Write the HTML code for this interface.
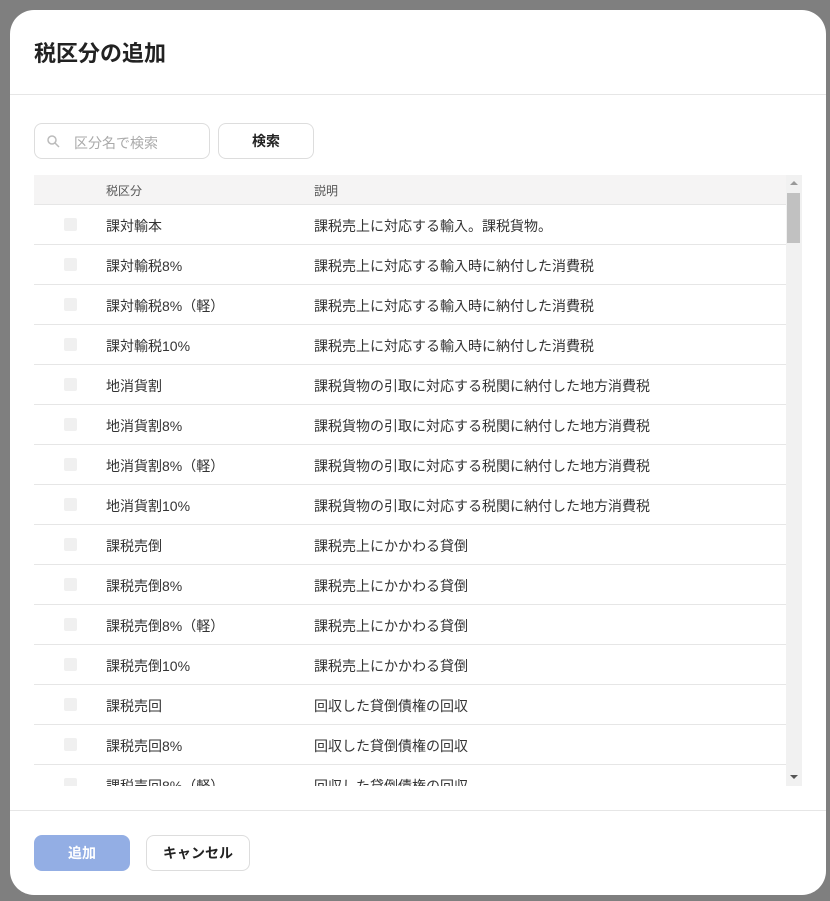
<!DOCTYPE html>
<html><head><meta charset="utf-8"><style>
*{box-sizing:border-box;margin:0;padding:0}
body{width:830px;height:901px;background:#7f7f7f;position:relative;overflow:hidden;font-family:"Liberation Sans","Noto Sans CJK JP",sans-serif;color:#333}
.modal{position:absolute;left:10px;top:10px;width:816px;height:885px;background:#fff;border-radius:24px;overflow:hidden}
h1{position:absolute;left:24px;top:26px;font-size:22px;font-weight:bold;color:#222}
.hr{position:absolute;left:0;right:0;height:1px;background:#e6e6e6}
.search{position:absolute;left:24px;top:113px;width:176px;height:36px;border:1px solid #ddd;border-radius:8px;font-size:14px;color:#aaa;padding:9px 0 0 39px}
.btn{position:absolute;border:1px solid #ddd;border-radius:8px;font-size:14px;font-weight:bold;color:#222;text-align:center}
.tbl{position:absolute;left:24px;top:165px;width:752px;height:611px;overflow:hidden}
.th{height:30px;background:#f5f4f4;border-bottom:1px solid #e6e6e6;font-size:12px;color:#555;position:relative}
.row{height:40px;border-bottom:1px solid #e6e6e6;position:relative;font-size:14px;color:#333}
.c1{position:absolute;left:72px;top:11px}
.c2{position:absolute;left:280px;top:11px}
.th .c1,.th .c2{top:7px}
.cb{position:absolute;left:30px;top:13px;width:13px;height:13px;background:#f0f0f0;border-radius:2px}
.sb{position:absolute;left:776px;top:165px;width:16px;height:611px;background:#f1f1f1}
</style></head><body>
<div class="modal">
<h1>税区分の追加</h1>
<div class="hr" style="top:84px"></div>
<div class="search"><svg style="position:absolute;left:12px;top:11px" width="13" height="13" viewBox="0 0 13 13"><circle cx="5" cy="5" r="4" fill="none" stroke="#bbb" stroke-width="1.5"/><path d="M8 8l4 4" stroke="#bbb" stroke-width="1.5"/></svg>区分名で検索</div>
<div class="btn" style="left:208px;top:113px;width:96px;height:36px;line-height:34px">検索</div>
<div class="tbl">
<div class="th"><span class="c1">税区分</span><span class="c2">説明</span></div>
<div class="row"><i class="cb"></i><span class="c1">課対輸本</span><span class="c2">課税売上に対応する輸入。課税貨物。</span></div>
<div class="row"><i class="cb"></i><span class="c1">課対輸税8%</span><span class="c2">課税売上に対応する輸入時に納付した消費税</span></div>
<div class="row"><i class="cb"></i><span class="c1">課対輸税8%（軽）</span><span class="c2">課税売上に対応する輸入時に納付した消費税</span></div>
<div class="row"><i class="cb"></i><span class="c1">課対輸税10%</span><span class="c2">課税売上に対応する輸入時に納付した消費税</span></div>
<div class="row"><i class="cb"></i><span class="c1">地消貨割</span><span class="c2">課税貨物の引取に対応する税関に納付した地方消費税</span></div>
<div class="row"><i class="cb"></i><span class="c1">地消貨割8%</span><span class="c2">課税貨物の引取に対応する税関に納付した地方消費税</span></div>
<div class="row"><i class="cb"></i><span class="c1">地消貨割8%（軽）</span><span class="c2">課税貨物の引取に対応する税関に納付した地方消費税</span></div>
<div class="row"><i class="cb"></i><span class="c1">地消貨割10%</span><span class="c2">課税貨物の引取に対応する税関に納付した地方消費税</span></div>
<div class="row"><i class="cb"></i><span class="c1">課税売倒</span><span class="c2">課税売上にかかわる貸倒</span></div>
<div class="row"><i class="cb"></i><span class="c1">課税売倒8%</span><span class="c2">課税売上にかかわる貸倒</span></div>
<div class="row"><i class="cb"></i><span class="c1">課税売倒8%（軽）</span><span class="c2">課税売上にかかわる貸倒</span></div>
<div class="row"><i class="cb"></i><span class="c1">課税売倒10%</span><span class="c2">課税売上にかかわる貸倒</span></div>
<div class="row"><i class="cb"></i><span class="c1">課税売回</span><span class="c2">回収した貸倒債権の回収</span></div>
<div class="row"><i class="cb"></i><span class="c1">課税売回8%</span><span class="c2">回収した貸倒債権の回収</span></div>
<div class="row"><i class="cb"></i><span class="c1">課税売回8%（軽）</span><span class="c2">回収した貸倒債権の回収</span></div>
</div>
<div class="sb"><svg style="position:absolute;left:4px;top:5px" width="8" height="6"><path d="M0 5L4 1L8 5Z" fill="#999"/></svg><div style="position:absolute;left:1px;top:18px;width:13px;height:50px;background:#c1c1c1"></div><svg style="position:absolute;left:4px;top:599px" width="8" height="6"><path d="M0 1L4 5L8 1Z" fill="#555"/></svg></div>
<div class="hr" style="top:800px"></div>
<div class="btn" style="left:24px;top:825px;width:96px;height:36px;line-height:36px;background:#93aee4;border:none;color:#fff">追加</div>
<div class="btn" style="left:136px;top:825px;width:104px;height:36px;line-height:34px">キャンセル</div>
</div>
</body></html>
